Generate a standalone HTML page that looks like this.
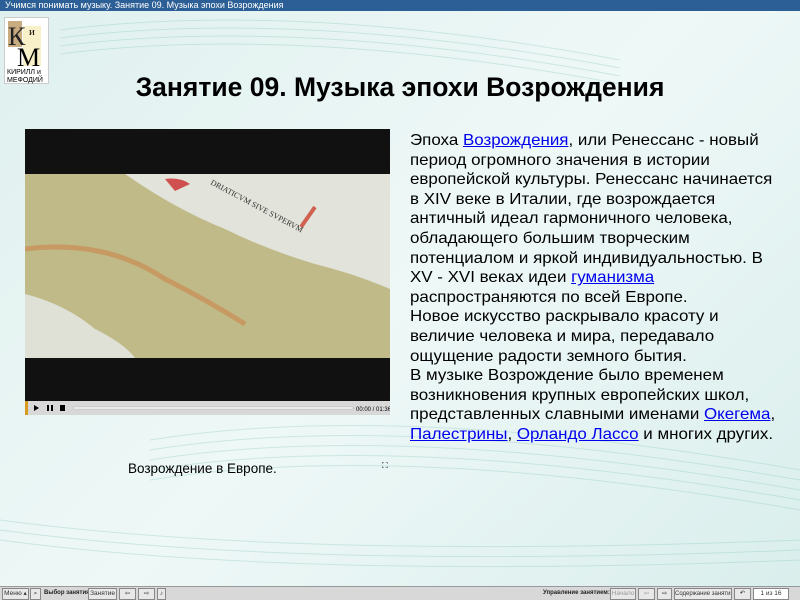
<!DOCTYPE html>
<html><head><meta charset="utf-8"><style>
*{margin:0;padding:0;box-sizing:border-box}
body{width:800px;height:600px;overflow:hidden;position:relative;font-family:"Liberation Sans",sans-serif;background:linear-gradient(135deg,#dff0ee 0%,#eef8f7 50%,#d9eeec 100%)}
#tb{position:absolute;left:0;top:0;width:800px;height:11px;background:#2c5f95;color:#fff;font-size:9px;line-height:11px;padding-left:5px}
#logo{position:absolute;left:4px;top:17px;width:45px;height:67px;background:#fff;border:1px solid #ccc}
h1{position:absolute;left:0;width:800px;top:72px;text-align:center;font-size:26.5px;font-weight:bold;color:#000}
#vid{position:absolute;left:25px;top:129px;width:365px;height:272px;background:#111}
#ctl{position:absolute;left:25px;top:401px;width:365px;height:14px;background:#d8d8d8;border-left:3px solid #d89a20}
#txt{position:absolute;left:410px;top:131px;font-size:16px;line-height:19.6px;color:#000;white-space:nowrap;transform:scaleX(1.058);transform-origin:0 0}
#txt a{color:#0000ee;text-decoration:underline}
#cap{position:absolute;left:128px;top:461px;font-size:13.5px}
#bb{position:absolute;left:0;top:586px;width:800px;height:14px;background:#d8d8d8;border-top:1px solid #999;font-size:6.5px;line-height:10px;white-space:nowrap}
.b{position:absolute;top:1px;height:12px;border:1px solid #888;background:#e8e8e8;color:#333;overflow:hidden;text-align:center}
.l{position:absolute;top:1px;font-weight:bold;color:#222}
</style></head><body>
<svg style="position:absolute;left:0;top:0" width="800" height="600" opacity="0.35">
<g fill="none" stroke="#8ec8c4" stroke-width="1">
<path d="M60 30 Q300 0 620 60"/><path d="M60 38 Q300 8 620 68"/><path d="M60 46 Q300 16 620 76"/><path d="M60 54 Q300 24 620 84"/>
<path d="M150 440 Q400 400 800 470"/><path d="M150 450 Q400 410 800 480"/><path d="M150 460 Q400 420 800 490"/><path d="M150 470 Q400 430 800 500"/><path d="M150 480 Q400 440 800 510"/>
<path d="M0 520 Q300 560 800 540"/><path d="M0 530 Q300 570 800 550"/><path d="M0 540 Q300 580 800 560"/>
</g></svg>
<div id="tb">Учимся понимать музыку. Занятие 09. Музыка эпохи Возрождения</div>
<div id="logo"><svg width="45" height="67"><rect x="3" y="3" width="14" height="26" fill="#c8ab80"/><rect x="18" y="8" width="18" height="40" fill="#f7f0c8"/><text x="3" y="27" font-family="Liberation Serif" font-size="26" fill="#222">К</text><text x="24" y="17" font-family="Liberation Serif" font-size="11">и</text><text x="12" y="48" font-family="Liberation Serif" font-size="26">М</text><text x="2" y="56" font-size="7" font-family="Liberation Sans">КИРИЛЛ и</text><text x="2" y="64" font-size="7" font-family="Liberation Sans">МЕФОДИЙ</text></svg></div>
<h1>Занятие 09. Музыка эпохи Возрождения</h1>
<div id="vid"><svg width="365" height="272" style="position:absolute;top:0;left:0">
<rect y="45" width="365" height="184" fill="#bfba88"/>
<path d="M100 45 L365 45 L365 160 Q330 145 290 135 Q240 120 200 100 Q150 80 100 45Z" fill="#e2e3da"/>
<path d="M0 165 Q40 175 70 200 Q100 215 110 229 L0 229Z" fill="#dfe1d6"/>
<path d="M0 120 Q80 110 140 150 Q180 170 220 195" stroke="#c9915a" stroke-width="5" fill="none" opacity=".8"/>
<path d="M140 50 Q155 48 165 55 L150 62Z" fill="#d05050"/>
<path d="M290 78 L276 98" stroke="#d06050" stroke-width="4"/>
<text x="185" y="55" font-size="8" fill="#333" transform="rotate(28 185 55)" font-family="Liberation Serif">DRIATICVM SIVE SVPERVM</text>
</svg></div>
<div id="ctl"><svg width="362" height="14"><path d="M6 4 L11 7 L6 10Z" fill="#000"/><rect x="19" y="4" width="2" height="6"/><rect x="23" y="4" width="2" height="6"/><rect x="32" y="4" width="5" height="6"/><rect x="45" y="6" width="280" height="2" fill="#fff" stroke="#aaa" stroke-width=".5"/><text x="328" y="10" font-size="6" font-family="Liberation Sans">00:00 / 01:36</text></svg></div>
<div id="txt">
<div>Эпоха <a>Возрождения</a>, или Ренессанс - новый</div>
<div>период огромного значения в истории</div>
<div>европейской культуры. Ренессанс начинается</div>
<div>в XIV веке в Италии, где возрождается</div>
<div>античный идеал гармоничного человека,</div>
<div>обладающего большим творческим</div>
<div>потенциалом и яркой индивидуальностью. В</div>
<div>XV - XVI веках идеи <a>гуманизма</a></div>
<div>распространяются по всей Европе.</div>
<div>Новое искусство раскрывало красоту и</div>
<div>величие человека и мира, передавало</div>
<div>ощущение радости земного бытия.</div>
<div>В музыке Возрождение было временем</div>
<div>возникновения крупных европейских школ,</div>
<div>представленных славными именами <a>Окегема</a>,</div>
<div><a>Палестрины</a>, <a>Орландо Лассо</a> и многих других.</div>
</div>
<div id="cap">Возрождение в Европе.</div>
<div style="position:absolute;left:382px;top:461px;font-size:8px">⛶</div>
<div id="bb">
<div class="b" style="left:2px;width:27px">Меню ▴</div>
<div class="b" style="left:30px;width:11px">⌕</div>
<div class="l" style="left:44px;font-size:6px">Выбор занятия:</div>
<div class="b" style="left:88px;width:29px">Занятие</div>
<div class="b" style="left:119px;width:17px">⇦</div>
<div class="b" style="left:138px;width:17px">⇨</div>
<div class="b" style="left:157px;width:9px">♪</div>
<div class="l" style="left:543px;font-size:6px">Управление занятием:</div>
<div class="b" style="left:610px;width:26px;color:#999">Начало</div>
<div class="b" style="left:638px;width:17px;color:#999">⇦</div>
<div class="b" style="left:657px;width:15px">⇨</div>
<div class="b" style="left:674px;width:58px;font-size:6px">Содержание занятия</div>
<div class="b" style="left:734px;width:17px">↶</div>
<div class="b" style="left:753px;width:36px;background:#fff">1 из 16</div>
</div>
</body></html>
